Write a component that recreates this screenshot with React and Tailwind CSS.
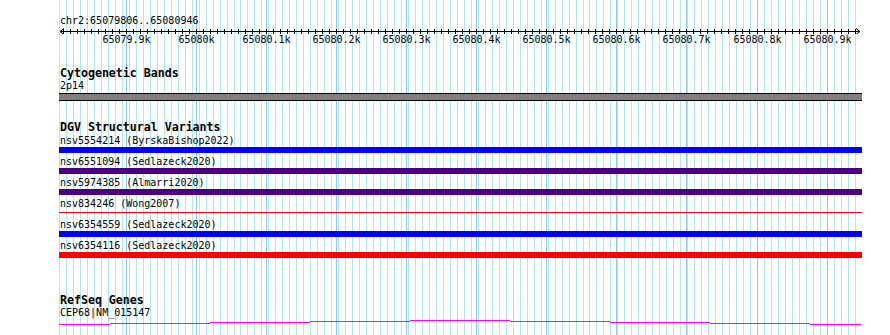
import React from "react";

// track area spans x 59..862 of the window
const LEFT = 59;
const WIDTH = 803;

const minorLines = Array.from({ length: 115 }, (_, j) => Math.round(6.98 * j));
const majorLines = Array.from({ length: 11 }, (_, k) => Math.round(125.6 + 70.1 * k) - LEFT);
const ticks = Array.from({ length: 114 }, (_, k) => Math.round(125.6 + 7.01 * (k - 9)) - LEFT).filter(
    (x) => x > 2 && x < WIDTH - 2
);

const tickLabels = [
    "65079.9k",
    "65080k",
    "65080.1k",
    "65080.2k",
    "65080.3k",
    "65080.4k",
    "65080.5k",
    "65080.6k",
    "65080.7k",
    "65080.8k",
    "65080.9k",
];

const variants = [
    { label: "nsv5554214 (ByrskaBishop2022)", color: "bg-[#0000ff]" },
    { label: "nsv6551094 (Sedlazeck2020)", color: "bg-[#4b0082]" },
    { label: "nsv5974385 (Almarri2020)", color: "bg-[#4b0082]" },
    { label: "nsv834246 (Wong2007)", thin: true },
    { label: "nsv6354559 (Sedlazeck2020)", color: "bg-[#0000ff]" },
    { label: "nsv6354116 (Sedlazeck2020)", color: "bg-[#ff0000]" },
];

// intron arc of the gene model, drawn as 1px steps
const geneSteps = [
    [0, 51, 5],
    [51, 151, 4],
    [151, 251, 3],
    [251, 351, 2],
    [351, 451, 1],
    [451, 551, 2],
    [551, 651, 3],
    [651, 751, 4],
    [751, 802, 5],
];

const Grid = () => (
    <div className="absolute top-0 bottom-0 left-[59px] w-[803px]">
        {minorLines.map((x) => (
            <div key={"m" + x} className="absolute top-0 bottom-0 w-px bg-[#aee9ee]" style={{ left: x }} />
        ))}
        {majorLines.map((x) => (
            <div key={"M" + x} className="absolute top-0 bottom-0 w-px bg-[#92c8ee]" style={{ left: x }} />
        ))}
    </div>
);

const TrackTitle = ({ children, className = "" }) => (
    <div className={"h-[13px] text-[11.6px] leading-[13px] font-bold " + className}>{children}</div>
);

const App = () => {
    return (
        <div className="relative w-[890px] h-[335px] overflow-hidden bg-white text-black font-['DejaVu_Sans_Mono','Liberation_Mono',monospace] text-[10px] leading-[12px]">
            <Grid />

            <div className="relative ml-[59px] w-[803px] flex flex-col">
                {/* ruler */}
                <div className="mt-[15px] h-[12px] pl-px">chr2:65079806..65080946</div>
                <svg width={WIDTH} height="7" className="block" shapeRendering="crispEdges">
                    <rect x="1" y="4" width={WIDTH - 3} height="1" fill="#000" />
                    {ticks.map((x) => (
                        <rect key={x} x={x} y="2" width="1" height="5" fill="#000" />
                    ))}
                    <path d="M1 4.5 L5 1.5 M1 4.5 L5 7.5" stroke="#000" strokeWidth="1" fill="none" shapeRendering="auto" />
                    <path d={`M${WIDTH - 2} 4.5 L${WIDTH - 6} 1.5 M${WIDTH - 2} 4.5 L${WIDTH - 6} 7.5`} stroke="#000" strokeWidth="1" fill="none" shapeRendering="auto" />
                </svg>
                <div className="relative h-[12px]">
                    {tickLabels.map((t, i) => (
                        <span
                            key={t}
                            className="absolute top-0 -translate-x-1/2 whitespace-nowrap"
                            style={{ left: majorLines[i] + 0.5 }}
                        >
                            {t}
                        </span>
                    ))}
                </div>

                {/* cytogenetic bands */}
                <TrackTitle className="mt-[21px] pl-px">Cytogenetic Bands</TrackTitle>
                <div className="h-[12px] pl-px">2p14</div>
                <div className="mt-px h-[8px] border-y border-black bg-[#808080]" />

                {/* structural variants */}
                <TrackTitle className="mt-[20px] pl-px">DGV Structural Variants</TrackTitle>
                <div className="mt-px flex flex-col gap-[3px]">
                    {variants.map((v) => (
                        <div key={v.label} className="flex flex-col">
                            <div className="h-[12px] pl-px whitespace-nowrap">{v.label}</div>
                            {v.thin ? (
                                <div className="h-[6px] pt-[2px]">
                                    <div className="h-px bg-[#ff0000]" />
                                </div>
                            ) : (
                                <div className={"h-[6px] " + v.color} />
                            )}
                        </div>
                    ))}
                </div>

                {/* genes */}
                <TrackTitle className="mt-[36px] pl-px">RefSeq Genes</TrackTitle>
                <div className="h-[12px] pl-px">CEP68|NM_015147</div>
                <svg width={WIDTH} height="8" className="block" shapeRendering="crispEdges">
                    {geneSteps.map(([a, b, y]) => (
                        <rect key={a} x={a} y={y} width={b - a} height="1" fill="#ff00ff" />
                    ))}
                </svg>
            </div>
        </div>
    );
};

export default App;
